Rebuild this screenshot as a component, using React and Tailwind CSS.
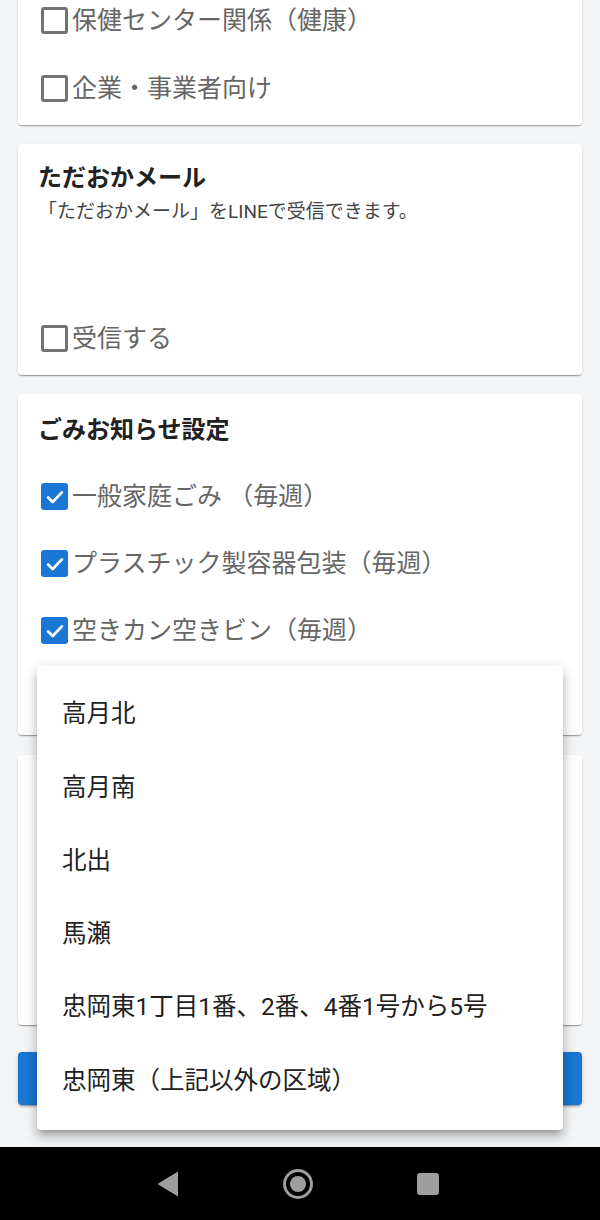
import React from 'react'

const cardShadow =
    'shadow-[0px_2px_1px_-1px_rgba(0,0,0,0.2),0px_1px_1px_0px_rgba(0,0,0,0.14),0px_1px_3px_0px_rgba(0,0,0,0.12)]'

const Box = ({ checked }) =>
    checked ? (
        <span className="w-[27px] h-[27px] rounded-[3px] bg-[#1976d2] flex items-center justify-center shrink-0">
            <svg width="22" height="22" viewBox="0 0 24 24">
                <path d="M4.5 12.5l5 5L19.5 7" fill="none" stroke="#fff" strokeWidth="3" strokeLinecap="round" strokeLinejoin="round" />
            </svg>
        </span>
    ) : (
        <span className="w-[27px] h-[27px] rounded-[3px] border-[3px] border-[#737373] shrink-0" />
    )

const CheckRow = ({ label, checked, h = 'h-[68px]' }) => (
    <div className={`${h} flex items-center gap-[4px] pl-[23px]`}>
        <Box checked={checked} />
        <span className="text-[25px] leading-none text-[#666]">{label}</span>
    </div>
)

const areas = [
    '高月北',
    '高月南',
    '北出',
    '馬瀬',
    '忠岡東1丁目1番、2番、4番1号から5号',
    '忠岡東（上記以外の区域）',
]

export default function App() {
    return (
        <div
            className="relative w-full h-[1220px] overflow-hidden bg-[#f4f5f7] flex flex-col"
            style={{ fontFamily: 'Roboto, "Noto Sans CJK JP", sans-serif' }}
        >
            <div className="flex-1 px-[18px] flex flex-col">
                {/* notification categories (scrolled) */}
                <div className={`-mt-[14px] bg-white rounded-[4px] pb-[3px] ${cardShadow}`}>
                    <CheckRow label="保健センター関係（健康）" />
                    <CheckRow label="企業・事業者向け" />
                </div>

                {/* mail */}
                <div className={`mt-[19px] bg-white rounded-[4px] pt-[16px] pb-[3px] ${cardShadow}`}>
                    <h2 className="px-[20px] text-[24px] leading-[36px] font-bold text-[#212121]">ただおかメール</h2>
                    <p className="px-[20px] mt-[5px] text-[19px] leading-[22px] text-[#444]">
                        「ただおかメール」をLINEで受信できます。
                    </p>
                    <div className="h-[81px]" />
                    <CheckRow label="受信する" />
                </div>

                {/* garbage */}
                <div className={`mt-[19px] bg-white rounded-[4px] pt-[18px] ${cardShadow}`}>
                    <h2 className="px-[20px] text-[24px] leading-[36px] font-bold text-[#212121]">ごみお知らせ設定</h2>
                    <div className="mt-[15px]">
                        <CheckRow label="一般家庭ごみ （毎週）" checked h="h-[67px]" />
                        <CheckRow label="プラスチック製容器包装（毎週）" checked h="h-[67px]" />
                        <CheckRow label="空きカン空きビン（毎週）" checked h="h-[67px]" />
                    </div>
                    <div className="h-[71px]" />
                </div>

                <div className={`mt-[20px] h-[270px] bg-white rounded-[4px] ${cardShadow}`} />

                <div className="mt-[27px] h-[53px] rounded-[4px] bg-[#1976d2] shadow-[0px_3px_1px_-2px_rgba(0,0,0,0.2),0px_2px_2px_0px_rgba(0,0,0,0.14),0px_1px_5px_0px_rgba(0,0,0,0.12)]" />
            </div>

            {/* android nav */}
            <div className="h-[73px] bg-black flex items-center justify-center gap-[90px] pr-[4px]">
                <div className="w-[40px] flex justify-center">
                    <svg width="22" height="26" viewBox="0 0 22 26">
                        <path d="M21 0.5V25.5L0.5 13Z" fill="#9e9e9e" />
                    </svg>
                </div>
                <div className="w-[40px] flex justify-center">
                    <svg width="32" height="32" viewBox="0 0 32 32">
                        <circle cx="16" cy="16" r="13.5" fill="none" stroke="#9e9e9e" strokeWidth="3" />
                        <circle cx="16" cy="16" r="8" fill="#9e9e9e" />
                    </svg>
                </div>
                <div className="w-[40px] flex justify-center">
                    <span className="w-[22px] h-[22px] rounded-[3px] bg-[#9e9e9e]" />
                </div>
            </div>

            {/* area select menu */}
            <div className="absolute left-[37px] top-[666px] w-[526px] bg-white rounded-[4px] py-[12px] shadow-[0px_5px_5px_-3px_rgba(0,0,0,0.2),0px_8px_10px_1px_rgba(0,0,0,0.14),0px_3px_14px_2px_rgba(0,0,0,0.12)]">
                {areas.map((a) => (
                    <div key={a} className="h-[73.3px] flex items-center px-[25px] text-[24.5px] text-[#212121]">
                        {a}
                    </div>
                ))}
            </div>
        </div>
    )
}
